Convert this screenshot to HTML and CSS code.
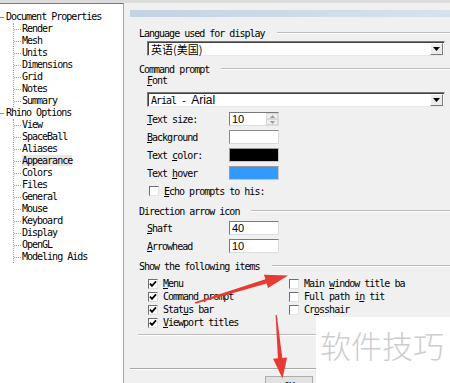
FILE: index.html
```html
<!DOCTYPE html>
<html>
<head>
  <meta charset="UTF-8">
  <title>Rhino Options</title>
  <link rel="stylesheet" href="styles.css">
</head>
<body>
  <div class="topband"></div>
  <div class="main">

    <div class="tree">
      <div class="node top">Document Properties</div>
      <div class="sub">
        <div class="node">Render</div>
        <div class="node">Mesh</div>
        <div class="node">Units</div>
        <div class="node">Dimensions</div>
        <div class="node">Grid</div>
        <div class="node">Notes</div>
        <div class="node">Summary</div>
      </div>
      <div class="node top">Rhino Options</div>
      <div class="sub">
        <div class="node">View</div>
        <div class="node">SpaceBall</div>
        <div class="node">Aliases</div>
        <div class="node"><span class="sel">Appearance</span></div>
        <div class="node">Colors</div>
        <div class="node">Files</div>
        <div class="node">General</div>
        <div class="node">Mouse</div>
        <div class="node">Keyboard</div>
        <div class="node">Display</div>
        <div class="node">OpenGL</div>
        <div class="node">Modeling Aids</div>
      </div>
    </div>

    <div class="pane">
      <div class="pane-head"></div>
      <div class="pane-body">

        <div class="group-title first">Language used for display</div>
        <div class="combo">
          <span class="combo-text cjk">英语(美国)</span>
          <span class="drop"><svg width="7" height="4" viewBox="0 0 7 4"><path d="M0 0H7L3.5 4Z" fill="#000"/></svg></span>
        </div>

        <div class="group-title mid">Command prompt</div>
        <div class="field-label"><u>F</u>ont</div>
        <div class="combo combo-font">
          <span class="combo-text">Arial - <span class="sans">Arial</span></span>
          <span class="drop"><svg width="7" height="4" viewBox="0 0 7 4"><path d="M0 0H7L3.5 4Z" fill="#000"/></svg></span>
        </div>

        <div class="rows rows-prompt">
          <div class="row">
            <span class="label"><u>T</u>ext size:</span>
            <span class="box spin"><span class="val">10</span>
              <span class="spin-btns">
                <span class="spin-btn"><svg width="5" height="3" viewBox="0 0 5 3"><path d="M0 3H5L2.5 0Z" fill="#9a9a9a"/></svg></span>
                <span class="spin-btn"><svg width="5" height="3" viewBox="0 0 5 3"><path d="M0 0H5L2.5 3Z" fill="#9a9a9a"/></svg></span>
              </span>
            </span>
          </div>
          <div class="row">
            <span class="label"><u>B</u>ackground</span>
            <span class="box swatch swatch-white"></span>
          </div>
          <div class="row">
            <span class="label">Text <u>c</u>olor:</span>
            <span class="box swatch swatch-black"></span>
          </div>
          <div class="row">
            <span class="label">Text <u>h</u>over</span>
            <span class="box swatch swatch-blue"></span>
          </div>
          <div class="row row-check">
            <span class="cb"></span>
            <span><u>E</u>cho prompts to his:</span>
          </div>
        </div>

        <div class="group-title mid">Direction arrow icon</div>
        <div class="rows rows-arrow">
          <div class="row">
            <span class="label"><u>S</u>haft</span>
            <span class="box"><span class="val">40</span></span>
          </div>
          <div class="row">
            <span class="label"><u>A</u>rrowhead</span>
            <span class="box"><span class="val">10</span></span>
          </div>
        </div>

        <div class="group-title mid">Show the following items</div>
        <div class="checks">
          <div class="check"><span class="cb on"><svg width="8" height="8" viewBox="0 0 8 8"><path d="M1 3.6L3 5.8L7 1.4" fill="none" stroke="#000" stroke-width="1.8"/></svg></span><span><u>M</u>enu</span></div>
          <div class="check"><span class="cb"></span><span>Main <u>w</u>indow title ba</span></div>
          <div class="check"><span class="cb on"><svg width="8" height="8" viewBox="0 0 8 8"><path d="M1 3.6L3 5.8L7 1.4" fill="none" stroke="#000" stroke-width="1.8"/></svg></span><span>Command prompt</span></div>
          <div class="check"><span class="cb"></span><span>Full path i<u>n</u> tit</span></div>
          <div class="check"><span class="cb on"><svg width="8" height="8" viewBox="0 0 8 8"><path d="M1 3.6L3 5.8L7 1.4" fill="none" stroke="#000" stroke-width="1.8"/></svg></span><span>Stat<u>u</u>s bar</span></div>
          <div class="check"><span class="cb"></span><span>Cr<u>o</u>sshair</span></div>
          <div class="check"><span class="cb on"><svg width="8" height="8" viewBox="0 0 8 8"><path d="M1 3.6L3 5.8L7 1.4" fill="none" stroke="#000" stroke-width="1.8"/></svg></span><span><u>V</u>iewport titles</span></div>
        </div>
        <div class="group-end"></div>

        <div class="separator"></div>
        <div class="buttons">
          <button class="btn">OK</button>
        </div>

      </div>
    </div>
  </div>

  <!-- red annotation arrows drawn over the dialog -->
  <svg class="marks" width="450" height="383" viewBox="0 0 450 383">
    <polygon fill="#e63a32" points="195.3,303.8 266.6,283.5 268,288.1 288,275.5 264,274.7 265.4,279.3 194.7,302.2"/>
    <polygon fill="#e63a32" points="276.8,315 282.3,357.9 287.1,357.4 282.5,378.5 273.1,358.8 277.9,358.3 275.6,315"/>
  </svg>

  <div class="wm">软件技巧</div>
</body>
</html>
```

FILE: styles.css
```css
* {
  box-sizing: border-box;
}
body {
  margin: 0;
  width: 450px;
  height: 383px;
  overflow: hidden;
  position: relative;
  background: #f0f0f0;
  color: #000;
  font-family: "DejaVu Sans Mono", "Liberation Mono", monospace;
  font-size: 10px;
  letter-spacing: -1px;
}
u {
  text-decoration: underline;
  text-underline-offset: 1px;
}
.topband {
  height: 3px;
  background: #dcdcdc;
}
.main {
  display: flex;
  height: 380px;
}

/* tree */
.tree {
  width: 124px;
  flex: none;
  background: #fff;
  border-top: 1px solid #7a7a7a;
  border-right: 1px solid #a8a8a8;
  padding-top: 7px;
}
.node {
  height: 12px;
  line-height: 12px;
  white-space: nowrap;
}
.top::before {
  content: "";
  display: inline-block;
  width: 4px;
  border-top: 1px solid #8a8a8a;
  vertical-align: middle;
  margin-right: 2px;
}
.sub {
  margin-left: 13px;
  border-left: 1px dotted #a0a0a0;
}
.sub .node::before {
  content: "";
  display: inline-block;
  width: 7px;
  border-top: 1px dotted #a0a0a0;
  vertical-align: middle;
  margin-right: 1px;
}
.sel {
  background: #e6e6e6;
}

/* right pane */
.pane {
  flex: 1;
  margin-left: 6px;
  padding-top: 7px;
}
.pane-head {
  height: 7px;
  background: linear-gradient(to right, #c3d3e3, #d6e2ed);
}
.pane-body {
  padding-left: 9px;
}
.group-title {
  display: flex;
  align-items: center;
  gap: 12px;
  height: 12px;
  white-space: nowrap;
}
.group-title::after {
  content: "";
  flex: 1;
  border-top: 1px solid #bcbcbc;
  border-bottom: 1px solid #fff;
}
.group-title.first {
  margin-top: 10px;
}
.group-title.mid {
  margin-top: 5px;
}
.combo + .group-title.mid {
  margin-top: 7px;
}
.field-label {
  height: 12px;
  line-height: 12px;
  padding-left: 8px;
}
.combo {
  display: flex;
  align-items: center;
  justify-content: space-between;
  height: 15px;
  margin: 2px 5px 0 8px;
  background: #fff;
  border: 1px solid;
  border-color: #7a7a7a #e8e8e8 #e8e8e8 #7a7a7a;
  box-shadow: inset 1px 1px 0 #404040;
}
.combo-font {
  margin-top: 5px;
}
.combo-text {
  padding-left: 3px;
  white-space: nowrap;
}
.cjk {
  font-family: "Noto Sans CJK SC", sans-serif;
  font-size: 11px;
  letter-spacing: 0;
}
.sans {
  font-family: "Liberation Sans", sans-serif;
  font-size: 12px;
  letter-spacing: 0;
}
.drop {
  width: 13px;
  height: 12px;
  margin-right: 1px;
  display: flex;
  align-items: center;
  justify-content: center;
  background: #ececec;
  border: 1px solid;
  border-color: #fff #7a7a7a #7a7a7a #fff;
}

/* label + box rows */
.rows {
  padding-left: 8px;
}
.rows-prompt {
  margin-top: 3px;
}
.rows-arrow {
  margin-top: 2px;
}
.row {
  display: flex;
  align-items: center;
  height: 18px;
  white-space: nowrap;
}
.label {
  width: 82px;
  flex: none;
}
.box {
  width: 50px;
  height: 14px;
  display: flex;
  align-items: center;
  justify-content: space-between;
  background: #fff;
  border: 1px solid;
  border-color: #7a7a7a #dcdcdc #dcdcdc #7a7a7a;
}
.val {
  padding-left: 2px;
  font-family: "Liberation Sans", sans-serif;
  font-size: 11px;
  letter-spacing: 0;
}
.spin-btns {
  display: flex;
  flex-direction: column;
  width: 12px;
  height: 12px;
}
.spin-btn {
  flex: 1;
  display: flex;
  align-items: center;
  justify-content: center;
  background: #eeeeee;
  border: 1px solid #d8d8d8;
}
.swatch-white {
  background: #fff;
  border-color: #8a8a8a #dadada #dadada #8a8a8a;
}
.swatch-black {
  background: #000;
  border-color: #9a9a9a #c8c8c8 #c8c8c8 #9a9a9a;
}
.swatch-blue {
  background: #3399ff;
  border-color: #9a9a9a #c8c8c8 #c8c8c8 #9a9a9a;
}
.row-check {
  padding-left: 2px;
  gap: 5px;
}

/* checkboxes */
.cb {
  width: 10px;
  height: 10px;
  flex: none;
  display: flex;
  align-items: center;
  justify-content: center;
  background: #fff;
  border: 1px solid;
  border-color: #6e6e6e #e2e2e2 #e2e2e2 #6e6e6e;
}
.checks {
  display: grid;
  grid-template-columns: 141px 1fr;
  grid-auto-rows: 13px;
  margin-top: 5px;
  padding-left: 9px;
}
.check {
  display: flex;
  align-items: center;
  gap: 5px;
  white-space: nowrap;
}
.group-end {
  margin: 5px 0 0 -1px;
  border-top: 1px solid #bcbcbc;
  border-bottom: 1px solid #fff;
}
.separator {
  margin: 32px 0 0 -9px;
  border-top: 1px solid #a9a9a9;
  border-bottom: 1px solid #fff;
}
.buttons {
  padding-left: 126px;
  margin-top: 6px;
}
.btn {
  width: 48px;
  height: 20px;
  padding: 0;
  background: #e1e1e1;
  border: 1px solid #adadad;
  font-family: "DejaVu Sans Mono", monospace;
  font-size: 10px;
  letter-spacing: -1px;
  color: #000;
}

/* overlays */
.marks {
  position: absolute;
  left: 0;
  top: 0;
  pointer-events: none;
}
.wm {
  position: absolute;
  left: 316px;
  top: 317px;
  width: 134px;
  height: 66px;
  padding-left: 4px;
  background: #fff;
  color: #cdcdcd;
  font-family: "Noto Sans CJK SC", sans-serif;
  font-weight: 300;
  font-size: 31px;
  line-height: 56px;
  letter-spacing: 0;
  white-space: nowrap;
}
```
